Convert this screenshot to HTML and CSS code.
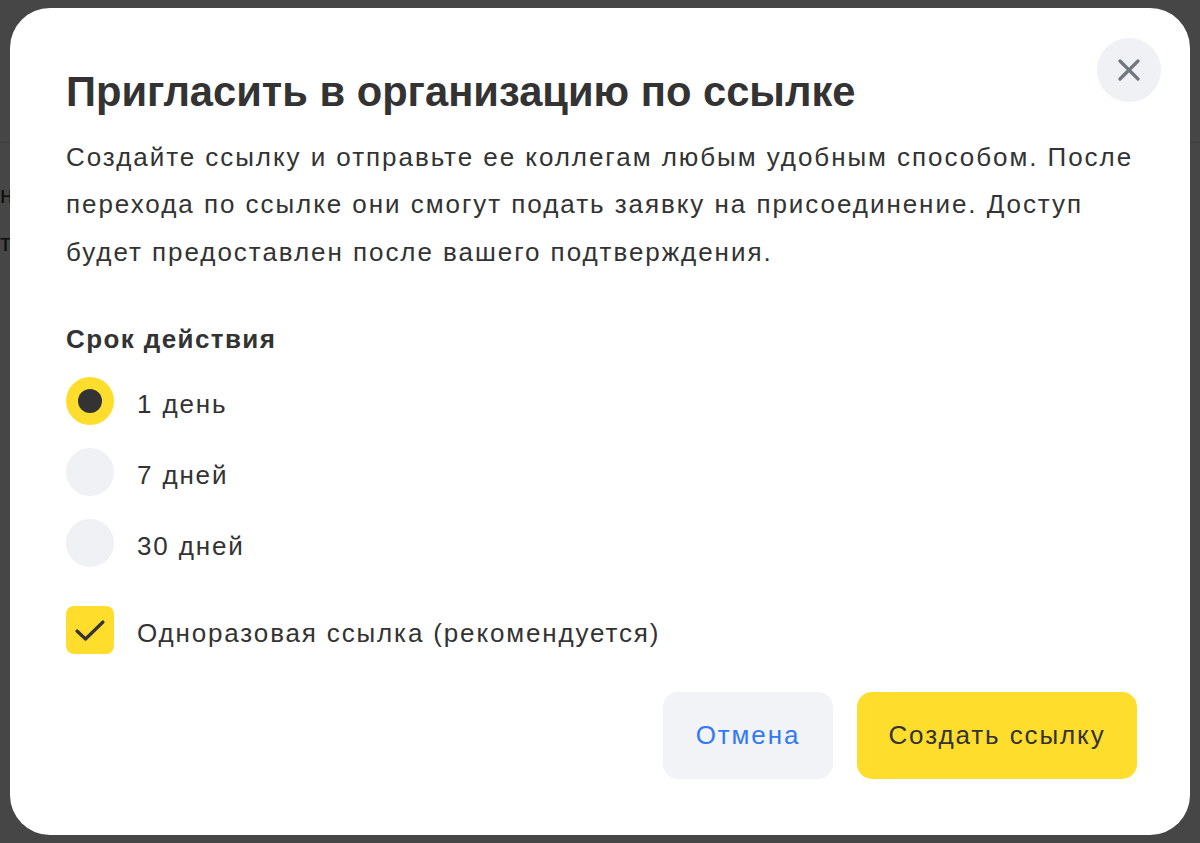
FILE: index.html
```html
<!DOCTYPE html>
<html lang="ru">
<head>
    <meta charset="UTF-8">
    <link rel="stylesheet" href="styles.css">
</head>
<body>
    <div class="page">
        <header class="page-header"></header>
        <main class="page-body">
            <p>нет</p>
            <p>тип</p>
        </main>
    </div>

    <div class="overlay">
        <div class="modal" role="dialog">
            <button class="modal-close" aria-label="Закрыть">
                <svg width="22" height="22" viewBox="0 0 22 22">
                    <path d="M2 2 L20 20 M20 2 L2 20" stroke="#72767f" stroke-width="3.2" stroke-linecap="round"/>
                </svg>
            </button>

            <h2 class="modal-title">Пригласить в организацию по ссылке</h2>
            <p class="modal-text">Создайте ссылку и отправьте ее коллегам любым удобным способом. После перехода по ссылке они смогут подать заявку на присоединение. Доступ будет предоставлен после вашего подтверждения.</p>

            <div class="field">
                <div class="field-label">Срок действия</div>
                <div class="radio-list">
                    <label class="option">
                        <input type="radio" name="ttl" class="option-input" checked>
                        <span class="radio-mark"></span>
                        <span class="option-text">1 день</span>
                    </label>
                    <label class="option">
                        <input type="radio" name="ttl" class="option-input">
                        <span class="radio-mark"></span>
                        <span class="option-text">7 дней</span>
                    </label>
                    <label class="option">
                        <input type="radio" name="ttl" class="option-input">
                        <span class="radio-mark"></span>
                        <span class="option-text">30 дней</span>
                    </label>
                </div>
            </div>

            <label class="option option-check">
                <input type="checkbox" class="option-input" checked>
                <span class="check-mark">
                    <svg width="48" height="48" viewBox="0 0 48 48">
                        <path d="M11 25 L19.5 33 L37 16" fill="none" stroke="#333" stroke-width="3.2" stroke-linecap="round" stroke-linejoin="round"/>
                    </svg>
                </span>
                <span class="option-text">Одноразовая ссылка (рекомендуется)</span>
            </label>

            <div class="modal-actions">
                <button class="btn btn-secondary">Отмена</button>
                <button class="btn btn-primary">Создать ссылку</button>
            </div>
        </div>
    </div>
</body>
</html>
```

FILE: styles.css
```css
* {
    box-sizing: border-box;
}

body {
    margin: 0;
    font-family: "Liberation Sans", Arial, sans-serif;
    color: #333;
    background: #fff;
}

/* страница под затемнением */
.page {
    display: flex;
    flex-direction: column;
    height: 100vh;
}

.page-header {
    height: 143px;
    border-bottom: 1px solid #ddd;
}

.page-body {
    padding-top: 28px;
    font-size: 24px;
    line-height: 48px;
}

.page-body p {
    margin: 0;
}

.overlay {
    position: fixed;
    top: 0;
    left: 0;
    right: 0;
    bottom: 0;
    background: rgba(0, 0, 0, 0.725);
    display: flex;
    justify-content: center;
    align-items: center;
}

.modal {
    position: relative;
    width: 1180px;
    padding: 56px 53px 56px 56px;
    background: #fff;
    border-radius: 40px;
}

.modal-close {
    position: absolute;
    top: 30px;
    right: 29px;
    width: 64px;
    height: 64px;
    padding: 0;
    border: none;
    border-radius: 50%;
    background: #f0f1f5;
    display: flex;
    justify-content: center;
    align-items: center;
    cursor: pointer;
}

.modal-title {
    margin: 0;
    font-size: 41.7px;
    line-height: 56px;
    font-weight: bold;
    color: #333;
}

.modal-text {
    margin: 14px -20px 0 0;
    font-size: 26px;
    line-height: 47.5px;
    letter-spacing: 1.95px;
    color: #333;
}

.field {
    margin-top: 47px;
    display: flex;
    flex-direction: column;
    gap: 22px;
}

.field-label {
    font-size: 26px;
    line-height: 32px;
    font-weight: bold;
    letter-spacing: 1.4px;
}

.radio-list {
    display: flex;
    flex-direction: column;
    gap: 23px;
}

.option {
    display: flex;
    align-items: center;
    gap: 23px;
    cursor: pointer;
}

.option-input {
    display: none;
}

.option-text {
    font-size: 26px;
    line-height: 32px;
    padding-top: 5px;
    letter-spacing: 1.85px;
}

.radio-mark {
    width: 48px;
    height: 48px;
    flex-shrink: 0;
    border-radius: 50%;
    background: #f0f1f5;
    display: flex;
    justify-content: center;
    align-items: center;
}

.option-input:checked + .radio-mark {
    background: #ffdd2d;
}

.option-input:checked + .radio-mark::after {
    content: "";
    width: 24px;
    height: 24px;
    border-radius: 50%;
    background: #333;
}

.option-check {
    margin-top: 39px;
}

.check-mark {
    width: 48px;
    height: 48px;
    flex-shrink: 0;
    border-radius: 8px;
    background: #f0f1f5;
}

.check-mark svg {
    display: block;
    visibility: hidden;
}

.option-input:checked + .check-mark {
    background: #ffdd2d;
}

.option-input:checked + .check-mark svg {
    visibility: visible;
}

.modal-actions {
    margin-top: 38px;
    display: flex;
    justify-content: flex-end;
    gap: 24px;
}

.btn {
    height: 87px;
    padding: 0;
    border: none;
    border-radius: 15px;
    font-family: inherit;
    font-size: 26px;
    letter-spacing: 1.9px;
    cursor: pointer;
}

.btn-secondary {
    width: 170px;
    background: #f2f3f7;
    color: #3379f6;
}

.btn-primary {
    width: 280px;
    background: #ffdd2d;
    color: #333;
}
```
